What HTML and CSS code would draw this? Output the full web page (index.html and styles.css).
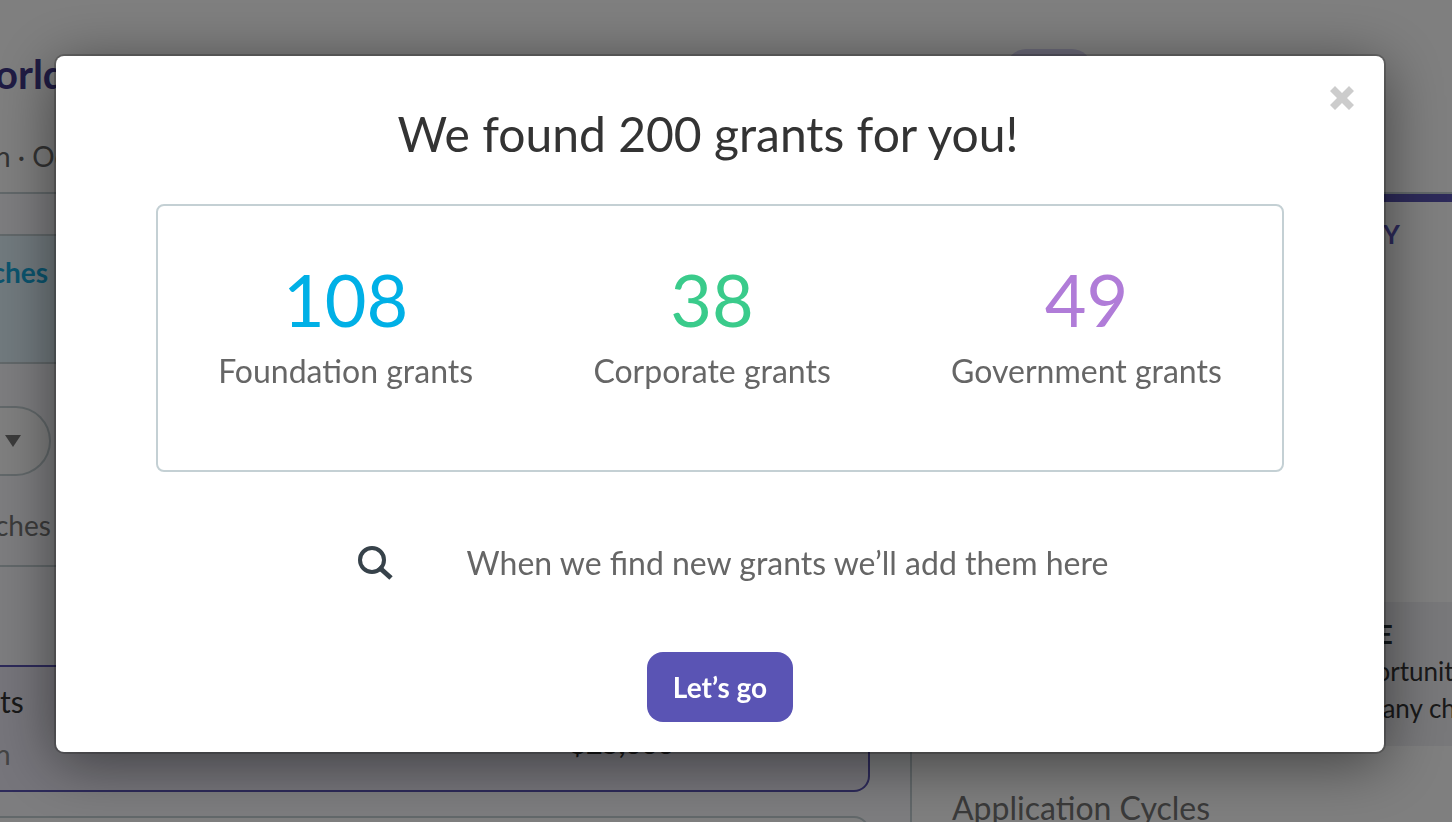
FILE: index.html
```
<!DOCTYPE html>
<html lang="en">
<head>
    <meta charset="UTF-8">
    <meta name="viewport" content="width=device-width, initial-scale=1.0">
    <title>Grants</title>
    <link rel="stylesheet" href="styles.css">
</head>
<body>

    <div class="page">
        <header class="page-header">
            <div class="header-row">
                <h1 class="scrolled">orld</h1>
                <span class="tag"></span>
            </div>
            <p class="location scrolled">n · Oc</p>
        </header>

        <div class="columns">
            <main class="results">
                <div class="match-tab"><a href="#">ches</a></div>
                <button class="filter" aria-label="Filter">
                    <svg width="16" height="12" viewBox="0 0 16 12"><path d="M0 0h16L8 12z" fill="currentColor"/></svg>
                </button>
                <p class="match-count scrolled">ches</p>

                <div class="cards">
                    <div class="card card-selected">
                        <div class="card-name">
                            <h2>ts</h2>
                            <p class="scrolled">n</p>
                        </div>
                        <strong class="amount">$25,000</strong>
                    </div>
                    <div class="card"></div>
                </div>
            </main>

            <aside class="details">
                <div class="detail-tab"><a href="#">Y</a></div>
                <div class="notice">
                    <div class="notice-text">
                        <h3>RE</h3>
                        <p>portunit</p>
                        <p>many ch</p>
                    </div>
                </div>
                <h2 class="cycles">Application Cycles</h2>
            </aside>
        </div>
    </div>

    <div class="backdrop">
        <div class="modal" role="dialog" aria-modal="true" aria-labelledby="modalTitle">
            <button class="close" aria-label="Close">
                <svg width="24" height="24" viewBox="0 0 24 24"><path d="M0 5l5-5 7 7 7-7 5 5-7 7 7 7-5 5-7-7-7 7-5-5 7-7z" fill="currentColor"/></svg>
            </button>
            <h2 class="modal-title" id="modalTitle">We found 200 grants for you!</h2>

            <div class="totals">
                <div class="total foundation">
                    <strong>108</strong>
                    <span>Foundation grants</span>
                </div>
                <div class="total corporate">
                    <strong>38</strong>
                    <span>Corporate grants</span>
                </div>
                <div class="total government">
                    <strong>49</strong>
                    <span>Government grants</span>
                </div>
            </div>

            <div class="info">
                <svg width="36" height="36" viewBox="0 0 36 36" fill="none" stroke="#37424a">
                    <circle cx="15" cy="15" r="12" stroke-width="4"/>
                    <path d="M22 22l3 3" stroke-width="4"/>
                    <path d="M24 24l10 9" stroke-width="5"/>
                </svg>
                <p>When we find new grants we’ll add them here</p>
            </div>

            <button class="go">Let’s go</button>
        </div>
    </div>

</body>
</html>
```

FILE: styles.css
```
* {
    box-sizing: border-box;
}

body {
    font-family: Lato, sans-serif;
    margin: 0;
    color: #666;
    background: #fff;
}

h1, h2, h3, p {
    margin: 0;
    font-weight: 400;
}

a {
    text-decoration: none;
}

button {
    font-family: inherit;
    cursor: pointer;
}

/* Page behind the dialog */
.page {
    display: flex;
    flex-direction: column;
    height: 100vh;
    overflow: hidden;
    white-space: nowrap;
}

.scrolled {
    text-indent: -5px;
}

.page-header {
    padding: 49px 0 18px;
    border-bottom: 2px solid #c4d0d4;
}

.header-row {
    display: grid;
    grid-template-columns: 64px 1fr 446px;
}

.page-header h1 {
    font-size: 40px;
    line-height: 50px;
    font-weight: 700;
    color: #403888;
}

.tag {
    grid-column: 3;
    width: 86px;
    height: 40px;
    border-radius: 20px;
    background: #d5d2f0;
}

.location {
    margin-top: 39px;
    font-size: 28px;
    line-height: 36px;
}

.columns {
    flex: 1;
    display: grid;
    grid-template-columns: 912px 1fr;
}

.results {
    padding-top: 40px;
    background: #fafbfe;
    border-right: 2px solid #c4d0d4;
}

.match-tab {
    height: 130px;
    padding-top: 18px;
    border: solid #c4d0d4;
    border-width: 2px 0;
    background: #e3f4fc;
    font-size: 28px;
    line-height: 36px;
    font-weight: 700;
}

.match-tab a {
    display: flex;
    justify-content: flex-end;
    width: 48px;
    color: #17a9dc;
}

.filter {
    display: flex;
    align-items: center;
    justify-content: flex-end;
    width: 51px;
    height: 70px;
    margin-top: 42px;
    padding: 0 28px 0 0;
    border: 2px solid #c4d0d4;
    border-left: 0;
    border-radius: 0 35px 35px 0;
    background: #fff;
    color: #777;
}

.match-count {
    padding-top: 31px;
    padding-bottom: 22px;
    border-bottom: 2px solid #c4d0d4;
    font-size: 28px;
    line-height: 36px;
    color: #777;
}

.cards {
    display: flex;
    flex-direction: column;
    gap: 24px;
    padding: 98px 40px 0 0;
}

.card {
    display: grid;
    grid-template-columns: 570px 1fr;
    min-height: 127px;
    border: 2px solid #c4d0d4;
    border-left: 0;
    border-radius: 0 16px 16px 0;
    background: #fff;
}

.card-selected {
    padding-top: 14px;
    border-color: #5a54b4;
    background: #edebf6;
}

.card h2 {
    font-size: 30px;
    line-height: 40px;
    color: #333;
}

.card p {
    margin-top: 15px;
    font-size: 28px;
    line-height: 36px;
    color: #888;
}

.amount {
    padding-top: 42px;
    font-size: 28px;
    line-height: 40px;
    color: #333;
}

.detail-tab {
    display: flex;
    justify-content: flex-end;
    height: 408px;
    padding-top: 14px;
    border-top: 8px solid #5a54b4;
    font-size: 26px;
    line-height: 36px;
    font-weight: 700;
}

.detail-tab a {
    width: 69px;
    color: #5a54b4;
}

.notice {
    display: flex;
    justify-content: flex-end;
    height: 144px;
    padding-top: 14px;
    background: #f0f0f4;
}

.notice-text {
    width: 91px;
    font-size: 26px;
    line-height: 37px;
    color: #333;
}

.notice h3 {
    font-size: 26px;
    font-weight: 700;
    color: #263238;
}

.cycles {
    padding: 42px 0 0 40px;
    font-size: 32px;
    line-height: 40px;
    color: #757575;
}

/* Dialog */
.backdrop {
    position: fixed;
    inset: 0;
    padding: 56px 68px 0 56px;
    background: rgba(0, 0, 0, 0.5);
}

.modal {
    position: relative;
    display: flex;
    flex-direction: column;
    padding: 46px 100px 30px;
    border-radius: 8px;
    background: #fff;
    box-shadow: 0 0 0 2px rgba(0, 0, 0, 0.2), 0 10px 60px rgba(0, 0, 0, 0.5);
}

.close {
    position: absolute;
    top: 30px;
    right: 30px;
    display: flex;
    padding: 0;
    border: 0;
    background: none;
    color: #ccc;
}

.modal-title {
    padding-right: 24px;
    font-size: 48px;
    line-height: 64px;
    text-align: center;
    color: #333;
}

.totals {
    display: flex;
    justify-content: space-around;
    height: 268px;
    margin-top: 38px;
    padding-top: 53px;
    border: 2px solid #c4d0d4;
    border-radius: 8px;
}

.total {
    display: flex;
    flex-direction: column;
    align-items: center;
}

.total strong {
    font-size: 72px;
    line-height: 80px;
    font-weight: 400;
}

.total span {
    margin-top: 12px;
    font-size: 32px;
    line-height: 40px;
}

.foundation strong {
    color: #00b0e6;
}

.corporate strong {
    color: #3acb8b;
}

.government strong {
    color: #b07cd8;
}

.info {
    display: flex;
    align-items: center;
    justify-content: center;
    gap: 74px;
    margin-top: 71px;
    padding-left: 25px;
}

.info p {
    font-size: 32px;
    line-height: 40px;
}

.go {
    align-self: center;
    height: 70px;
    margin-top: 69px;
    padding: 0 26px;
    border: 0;
    border-radius: 16px;
    background: #5a54b4;
    color: #fff;
    font-size: 28px;
    font-weight: 700;
}
```
